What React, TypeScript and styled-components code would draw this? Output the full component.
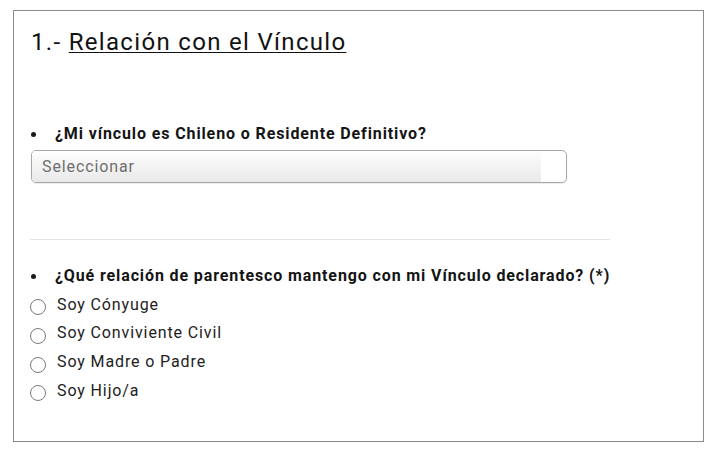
import React from "react";
import styled, { createGlobalStyle } from "styled-components";

const Global = createGlobalStyle`
  html, body { margin: 0; padding: 0; background: #fff; }
  body { font-family: Roboto, "Liberation Sans", Arial, sans-serif; color: #1f1f1f; letter-spacing: 0.055em; }
`;

const Page = styled.div`
  padding: 10px 0 0 13px;
`;

const Card = styled.section`
  box-sizing: border-box;
  width: 691px;
  height: 432px;
  border: 1px solid #8a8a8a;
  padding: 0 17px;
  display: flex;
  flex-direction: column;
`;

const Title = styled.h1`
  margin: 17px 0 0;
  font-size: 24px;
  line-height: 28px;
  font-weight: 400;
  color: #121212;
  letter-spacing: 0.055em;
`;

const Underlined = styled.span`
  text-decoration: underline;
  text-decoration-thickness: 1px;
  text-underline-offset: 2px;
`;

const Question = styled.div<{ $mt: number }>`
  margin-top: ${(p) => p.$mt}px;
  display: flex;
  align-items: center;
  font-size: 16px;
  line-height: 20px;
  font-weight: 700;
  color: #141414;
`;

const Dot = styled.span`
  width: 5px;
  height: 5px;
  border-radius: 50%;
  background: #1a1a1a;
  margin: 1px 19px 0 0;
  flex: none;
`;

const Select = styled.div`
  box-sizing: border-box;
  margin-top: 6px;
  width: 536px;
  height: 33px;
  border: 1px solid #a8a8a8;
  border-radius: 5px;
  box-shadow: 0 1px 1px rgba(0, 0, 0, 0.08);
  overflow: hidden;
  display: flex;
`;

const SelectFill = styled.div`
  flex: 1;
  margin-right: 25px;
  display: flex;
  align-items: center;
  padding-left: 10px;
  background: linear-gradient(#ffffff 0%, #f8f8f8 25%, #e9e9e9 100%);
  font-size: 16px;
  color: #6e6e6e;
`;

const Rule = styled.hr`
  margin: 56px 0 0 -1px;
  width: 580px;
  height: 0;
  border: 0;
  border-top: 1px solid #e4e4e4;
`;

const Options = styled.div`
  margin-top: 4px;
  display: flex;
  flex-direction: column;
`;

const Option = styled.label`
  height: 28.67px;
  display: flex;
  align-items: center;
  font-size: 16px;
  color: #222;
`;

const Radio = styled.span`
  box-sizing: border-box;
  width: 16px;
  height: 16px;
  border: 1px solid #7a7a7a;
  border-radius: 50%;
  background: #fff;
  margin: 6px 11px 0 -1px;
  flex: none;
`;

const options = ["Soy Cónyuge", "Soy Conviviente Civil", "Soy Madre o Padre", "Soy Hijo/a"];

export default function App() {
  return (
    <Page>
      <Global />
      <Card>
        <Title>
          1.- <Underlined>Relación con el Vínculo</Underlined>
        </Title>
        <Question $mt={68}>
          <Dot />
          ¿Mi vínculo es Chileno o Residente Definitivo?
        </Question>
        <Select>
          <SelectFill>Seleccionar</SelectFill>
        </Select>
        <Rule />
        <Question $mt={26}>
          <Dot />
          ¿Qué relación de parentesco mantengo con mi Vínculo declarado? (*)
        </Question>
        <Options>
          {options.map((o) => (
            <Option key={o}>
              <Radio />
              {o}
            </Option>
          ))}
        </Options>
      </Card>
    </Page>
  );
}
